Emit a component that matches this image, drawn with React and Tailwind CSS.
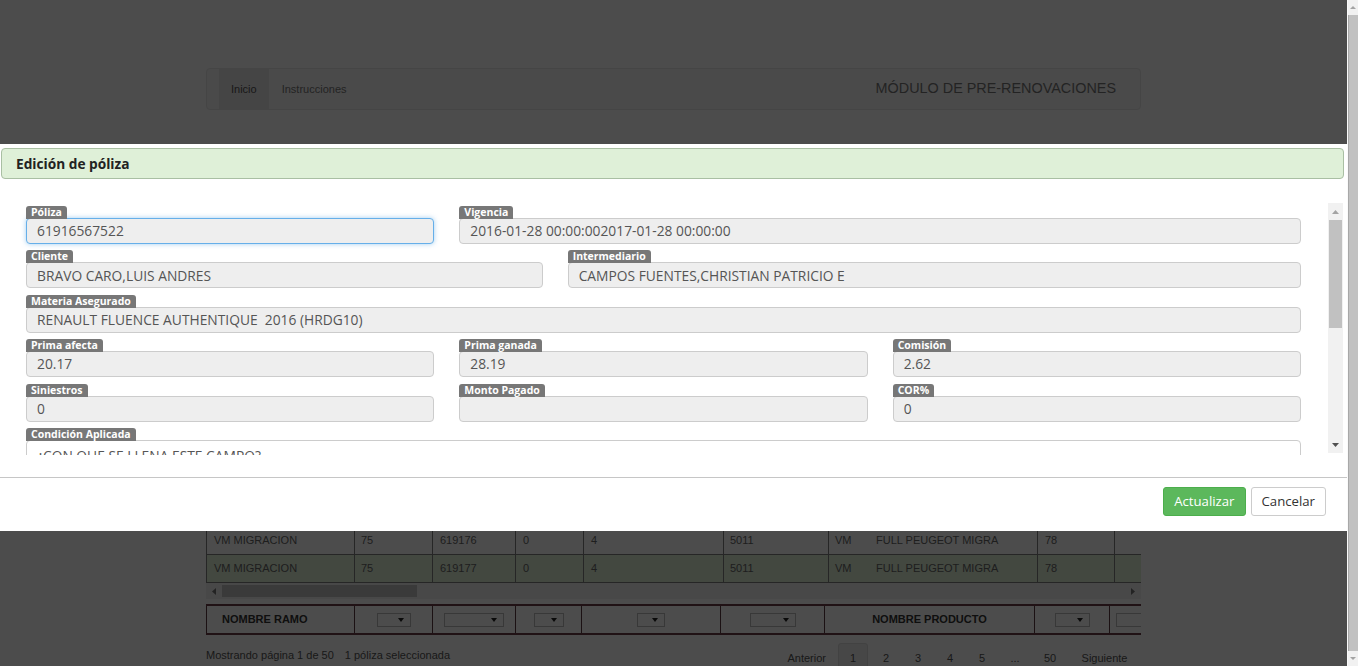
import React from "react";

function Tri({ dir = "up", color = "#a3a3a3", w = 7, h = 4 }) {
  const pts = {
    up: `0,${h} ${w / 2},0 ${w},${h}`,
    down: `0,0 ${w / 2},${h} ${w},0`,
    left: `${h},0 0,${w / 2} ${h},${w}`,
    right: `0,0 ${h},${w / 2} 0,${w}`,
  }[dir];
  const vw = dir === "left" || dir === "right" ? h : w;
  const vh = dir === "left" || dir === "right" ? w : h;
  return (
    <svg width={vw} height={vh} viewBox={`0 0 ${vw} ${vh}`}>
      <polygon points={pts} fill={color} />
    </svg>
  );
}

function Field({ label, value, span, focused }) {
  return (
    <div className={`flex flex-col ${span}`}>
      <div className="relative z-10 self-start h-[13px] px-[5px] rounded-t-[3px] bg-[#777] text-white text-[10.5px] font-bold leading-[13px]">
        {label}
      </div>
      <div
        className={
          focused
            ? "-mt-[1px] h-[26px] bg-[#eee] border border-[#66afe9] shadow-[0_0_5px_rgba(102,175,233,0.6)] rounded-[4px] pl-[10px] pt-[1px] flex items-center text-[13.8px] text-[#555] whitespace-pre"
            : "-mt-[1px] h-[26px] bg-[#eee] border border-[#ccc] rounded-[4px] pl-[10px] pt-[1px] flex items-center text-[13.8px] text-[#555] whitespace-pre"
        }
      >
        {value}
      </div>
    </div>
  );
}

function Sel({ w }) {
  return (
    <div
      className="h-[14px] border border-[#bbb] bg-white flex items-center justify-end pr-[6px]"
      style={{ width: w }}
    >
      <Tri dir="down" color="#222" w={6} h={4} />
    </div>
  );
}

const dataCols = [
  { w: 148, l: true, p: 7 },
  { w: 78, l: true, p: 6 },
  { w: 83, l: true, p: 7 },
  { w: 68, l: true, p: 7 },
  { w: 140, l: true, p: 7 },
  { w: 105, l: true, p: 6 },
  { w: 41, l: true, p: 6 },
  { w: 168, l: false, p: 7 },
  { w: 77, l: true, p: 7 },
  { w: 60, l: true, p: 7 },
];

function DataRow({ values, green }) {
  return (
    <div
      className={
        green
          ? "flex w-max h-[28px] border-b border-[#808080] bg-[#dff0d8]"
          : "flex w-max h-[28px] border-b border-[#808080] bg-white"
      }
    >
      {dataCols.map((c, i) => (
        <div
          key={i}
          className={
            c.l
              ? "border-l border-[#808080] flex items-center text-[11px] text-[#666] whitespace-nowrap"
              : "flex items-center text-[11px] text-[#666] whitespace-nowrap"
          }
          style={{ width: c.w, paddingLeft: c.p }}
        >
          {values[i]}
        </div>
      ))}
    </div>
  );
}

const filterCols = [
  { w: 148, t: "NOMBRE RAMO", left: true },
  { w: 78, s: 34 },
  { w: 83, s: 60 },
  { w: 66, s: 30 },
  { w: 139, s: 28 },
  { w: 104, s: 46 },
  { w: 210, t: "NOMBRE PRODUCTO" },
  { w: 75, s: 35 },
  { w: 60, s: 50, start: true },
];

export default function App() {
  return (
    <div className="w-[1358px] h-[666px] overflow-hidden flex bg-white">
      {/* page */}
      <div className="relative w-[1347px] h-full overflow-hidden font-['Liberation_Sans',Arial,sans-serif]">
        <div className="w-[935px] mx-auto pt-[68px]">
          {/* navbar */}
          <div className="h-[42px] border border-[#e7e7e7] bg-[#f8f8f8] rounded-[4px] flex items-stretch">
            <div className="ml-[12px] px-[12px] bg-[#e7e7e7] text-[#555] text-[11px] flex items-center">
              Inicio
            </div>
            <div className="px-[13px] text-[#777] text-[11px] flex items-center">
              Instrucciones
            </div>
            <div className="ml-auto pr-[24px] text-[#777] text-[14.4px] flex items-center">
              MÓDULO DE PRE-RENOVACIONES
            </div>
          </div>

          {/* content hidden behind modal */}
          <div className="h-[417px]" />

          {/* table */}
          <div className="w-[935px] overflow-hidden">
            <DataRow
              values={["VM MIGRACION", "75", "619176", "0", "4", "5011", "VM", "FULL PEUGEOT MIGRA", "78", ""]}
            />
            <DataRow
              green
              values={["VM MIGRACION", "75", "619177", "0", "4", "5011", "VM", "FULL PEUGEOT MIGRA", "78", ""]}
            />
            {/* horizontal scrollbar */}
            <div className="h-[16px] bg-[#f1f1f1] flex items-center">
              <div className="w-[16px] flex justify-center">
                <Tri dir="left" color="#777" w={7} h={4} />
              </div>
              <div className="w-[195px] h-[12px] bg-[#c1c1c1]" />
              <div className="flex-1" />
              <div className="w-[16px] flex justify-center">
                <Tri dir="right" color="#777" w={7} h={4} />
              </div>
            </div>
          </div>

          {/* filter row */}
          <div className="mt-[5px] w-[935px] overflow-hidden">
            <div className="flex w-max h-[31px] border-y-2 border-[#6b3f48]">
              {filterCols.map((c, i) => (
                <div
                  key={i}
                  className={
                    c.left
                      ? "border-l border-[#5a3a40] flex items-center pl-[15px] text-[11px] font-bold text-[#333]"
                      : c.start
                      ? "border-l border-[#5a3a40] flex items-center pl-[6px]"
                      : "border-l border-[#5a3a40] flex items-center justify-center text-[11px] font-bold text-[#333]"
                  }
                  style={{ width: c.w }}
                >
                  {c.t ? c.t : <Sel w={c.s} />}
                </div>
              ))}
            </div>
          </div>

          {/* footer info + pagination */}
          <div className="mt-[8px] flex items-start text-[11px] text-[#555]">
            <div className="pt-[4px] flex">
              <span>Mostrando página 1 de 50</span>
              <span className="ml-[11px]">1 póliza seleccionada</span>
            </div>
            <div className="ml-auto flex items-center">
              <div className="px-[12px] h-[30px] flex items-center">Anterior</div>
              <div className="w-[30px] h-[30px] flex items-center justify-center border border-[#ddd] bg-[#eee] rounded-[3px]">1</div>
              <div className="ml-[2px] w-[32px] h-[30px] flex items-center justify-center">2</div>
              <div className="w-[32px] h-[30px] flex items-center justify-center">3</div>
              <div className="w-[32px] h-[30px] flex items-center justify-center">4</div>
              <div className="w-[32px] h-[30px] flex items-center justify-center">5</div>
              <div className="w-[34px] h-[30px] flex items-center justify-center">...</div>
              <div className="w-[36px] h-[30px] flex items-center justify-center">50</div>
              <div className="w-[73px] h-[30px] flex items-center justify-center">Siguiente</div>
            </div>
          </div>
        </div>

        {/* backdrop */}
        <div className="absolute inset-0 bg-black/70" />

        {/* modal */}
        <div className="absolute left-0 top-[144px] w-[1347px] bg-white font-['Open_Sans',sans-serif]">
          <div className="ml-[1px] mr-[3px] mt-[4px] h-[31px] bg-[#dff0d8] border border-[#a9bfa3] rounded-[4px] flex items-center pl-[14px] pt-[1px] text-[13.7px] font-bold text-[#222]">
            Edición de póliza
          </div>

          <div className="mt-[24px] mr-[4px] h-[252px] flex">
            <div className="flex-1 overflow-hidden pl-[26px] pr-[27px] pt-[3px]">
              <div className="grid grid-cols-12 gap-x-[25px] gap-y-[6.4px]">
                <Field span="col-span-4" label="Póliza" value="61916567522" focused />
                <Field span="col-span-8" label="Vigencia" value="2016-01-28 00:00:002017-01-28 00:00:00" />
                <Field span="col-span-5" label="Cliente" value="BRAVO CARO,LUIS ANDRES" />
                <Field span="col-span-7" label="Intermediario" value="CAMPOS FUENTES,CHRISTIAN PATRICIO E" />
                <Field span="col-span-12" label="Materia Asegurado" value="RENAULT FLUENCE AUTHENTIQUE  2016 (HRDG10)" />
                <Field span="col-span-4" label="Prima afecta" value="20.17" />
                <Field span="col-span-4" label="Prima ganada" value="28.19" />
                <Field span="col-span-4" label="Comisión" value="2.62" />
                <Field span="col-span-4" label="Siniestros" value="0" />
                <Field span="col-span-4" label="Monto Pagado" value="" />
                <Field span="col-span-4" label="COR%" value="0" />
                <div className="col-span-12 flex flex-col">
                  <div className="relative z-10 self-start h-[13px] px-[5px] rounded-t-[3px] bg-[#777] text-white text-[10.5px] font-bold leading-[13px]">
                    Condición Aplicada
                  </div>
                  <div className="-mt-[1px] h-[60px] bg-white border border-[#ccc] rounded-[4px] pl-[10px] pt-[5px] text-[13.8px] text-[#555] whitespace-pre">
                    ¿CON QUE SE LLENA ESTE CAMPO?
                  </div>
                </div>
              </div>
            </div>
            {/* inner scrollbar */}
            <div className="w-[15px] h-[250px] bg-[#f1f1f1] flex flex-col items-center">
              <div className="h-[17px] w-full flex items-center justify-center">
                <Tri dir="up" color="#a3a3a3" />
              </div>
              <div className="w-[13px] h-[108px] bg-[#c1c1c1]" />
              <div className="flex-1" />
              <div className="h-[17px] w-full flex items-center justify-center">
                <Tri dir="down" color="#505050" />
              </div>
            </div>
          </div>

          <div className="mt-[22px] border-t border-[#c6c6c6] flex justify-end gap-[5px] pt-[9px] pb-[15px] pr-[21px]">
            <div className="h-[29px] px-[10px] flex items-center bg-[#5cb85c] border border-[#4cae4c] rounded-[3px] text-white text-[13.2px]">
              Actualizar
            </div>
            <div className="h-[29px] px-[10px] flex items-center bg-white border border-[#ccc] rounded-[3px] text-[#333] text-[13.2px]">
              Cancelar
            </div>
          </div>
        </div>
      </div>

      {/* page scrollbar */}
      <div className="w-[11px] h-full bg-[#f1f1f1] flex flex-col border-l border-[#fafafa]">
        <div className="h-[15px] flex items-center justify-center">
          <Tri dir="up" color="#a3a3a3" w={6} h={3} />
        </div>
        <div className="flex-1 bg-[#c1c1c1] border-l border-[#a8a8a8]" />
        <div className="h-[15px] flex items-center justify-center">
          <Tri dir="down" color="#a3a3a3" w={6} h={3} />
        </div>
      </div>
    </div>
  );
}
